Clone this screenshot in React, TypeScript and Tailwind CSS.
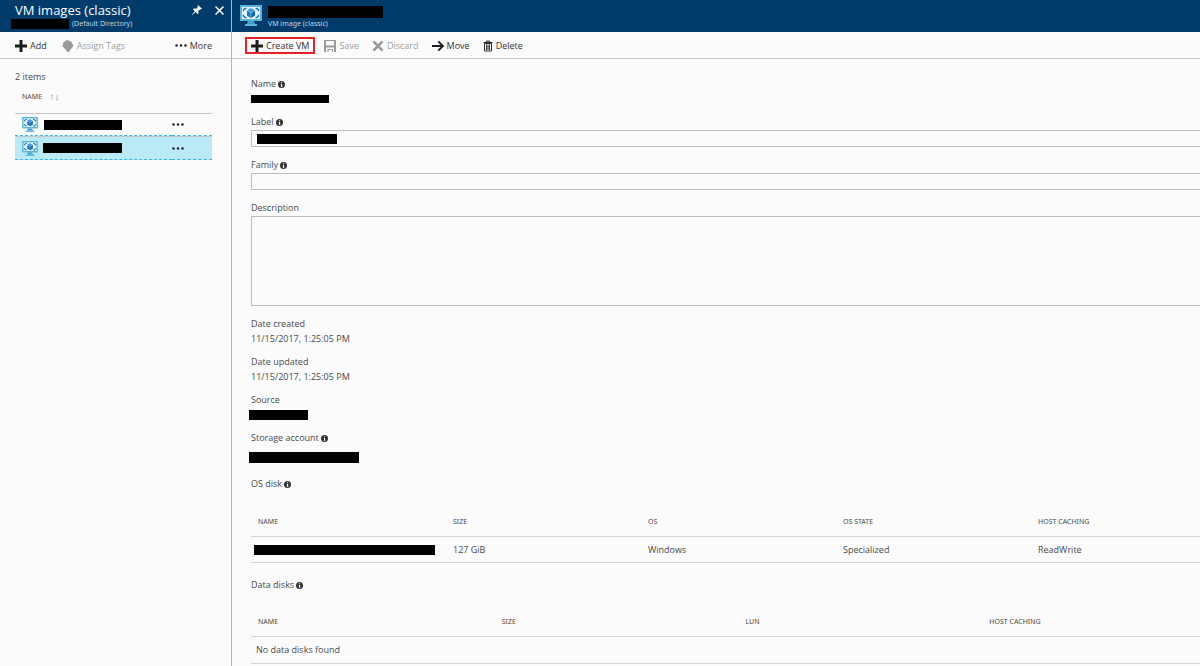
import type { ReactNode } from "react";

const osDiskColumns = ["NAME", "SIZE", "OS", "OS STATE", "HOST CACHING"];
const dataDiskColumns = ["NAME", "SIZE", "LUN", "HOST CACHING"];

function PlusIcon() {
  return (
    <svg width="12" height="12" viewBox="0 0 12 12" fill="#1c1c1c" aria-hidden="true">
      <path d="M4.500 0h3v4.500H12v3H7.500V12h-3V7.500H0v-3h4.500z" />
    </svg>
  );
}

function TagIcon() {
  return (
    <svg width="12" height="12" viewBox="0 0 12 12" fill="#9a9a9a" aria-hidden="true">
      <path d="M5 0 9 1.500 11.500 5.500 7 12 5.500 12 .7 6.300 1.300 2.500z" />
    </svg>
  );
}

function SaveIcon() {
  return (
    <svg width="12" height="12" viewBox="0 0 12 12" fill="none" stroke="#9a9a9a" aria-hidden="true">
      <path d="M1 12V0M11 12V0M1 6.500h10" strokeWidth="2" />
      <path d="M2 .5h8" />
      <path d="M4 12V9.500h4.500V12" strokeWidth="1.200" />
    </svg>
  );
}

function DiscardIcon() {
  return (
    <svg width="12" height="12" viewBox="0 0 12 12" stroke="#9a9a9a" strokeWidth="2.600" aria-hidden="true">
      <path d="M1.500 1.500l9 9M10.500 1.500l-9 9" />
    </svg>
  );
}

function MoveIcon() {
  return (
    <svg width="12" height="12" viewBox="0 0 12 12" fill="none" stroke="#1c1c1c" strokeWidth="1.800" aria-hidden="true">
      <path d="M0 6h11M6.300 1.300 11 6l-4.700 4.700" />
    </svg>
  );
}

function DeleteIcon() {
  return (
    <svg width="10" height="12" viewBox="0 0 10 12" fill="none" stroke="#2b2b2b" aria-hidden="true">
      <path d="M.5 2.500h9M3.500 2V1h3v1" />
      <path d="M1.500 3.500h7v7.500h-7zM3.500 4.500v5.500M5 4.500v5.500M6.500 4.500v5.500" />
    </svg>
  );
}

function DotsIcon() {
  return (
    <svg width="12" height="3" viewBox="0 0 12 3" fill="#1c1c1c" aria-hidden="true">
      <circle cx="1.500" cy="1.500" r="1.200" />
      <circle cx="6" cy="1.500" r="1.200" />
      <circle cx="10.500" cy="1.500" r="1.200" />
    </svg>
  );
}

function InfoIcon() {
  return (
    <svg width="7" height="7" viewBox="0 0 7 7" aria-hidden="true">
      <circle cx="3.500" cy="3.500" r="3.500" fill="#333" />
      <path d="M3 1.200h1.100v1H3zM2.700 2.900h1.400v2.300h.4v.6H2.700v-.6H3V3.500h-.3z" fill="#fff" />
    </svg>
  );
}

function VmIcon({ className }: { className: string }) {
  return (
    <svg className={className} viewBox="0 0 22 21" aria-hidden="true">
      <path d="M0 0h22v16H0z" fill="#59b4d9" />
      <path d="M2 2h18v12H2z" fill="#eaf6fb" />
      <path d="M8 16h6l1 3H7z" fill="#3f9fc6" />
      <path d="M5 19h12v2H5z" fill="#59b4d9" />
      <path
        d="M3.500 6.200V5l1.500-1.500h1.500M15.500 3.500H17L18.500 5v1.200M18.500 9.800V11L17 12.500h-1.500M6.500 12.500H5L3.500 11V9.800"
        fill="none"
        stroke="#1878c4"
        strokeWidth="1.500"
      />
      <path d="M11 3l4 2.200-4 2.300-4-2.300z" fill="#3c9ade" />
      <path d="M7 5.600l3.800 2.200V13L7 10.700z" fill="#1878c4" />
      <path d="M15 5.600l-3.800 2.200V13l3.800-2.300z" fill="#0f66b4" />
    </svg>
  );
}

function PinIcon() {
  return (
    <svg width="10" height="10" viewBox="0 0 10 10" fill="#fff" aria-hidden="true">
      <path d="M6 0l4 3.700-1 .7-.8-.2L6.300 6l.2 2.200-.9.8-2-2L.3 10 0 9.700l2.800-3.500L1 4.300l.9-.8 2.300.2L6 1.800 5.400.8z" />
    </svg>
  );
}

function CloseIcon() {
  return (
    <svg width="9" height="9" viewBox="0 0 9 9" stroke="#fff" strokeWidth="1.500" aria-hidden="true">
      <path d="M.5.5l8 8M8.500.5l-8 8" />
    </svg>
  );
}

// Private values are shown as a solid bar
function Redacted({ className }: { className: string }) {
  return <span aria-hidden="true" className={`block shrink-0 bg-black ${className}`} />;
}

function Command({ icon, label, disabled = false }: { icon: ReactNode; label: string; disabled?: boolean }) {
  return (
    <button type="button" disabled={disabled} className="flex items-center gap-[3px] text-[#333] disabled:text-[#a0a0a0]">
      {icon}
      {label}
    </button>
  );
}

function Field({ label, info = false, children }: { label: string; info?: boolean; children: ReactNode }) {
  return (
    <div className="mb-[9px]">
      <div className="mb-px flex items-center gap-0.5">
        {label}
        {info && <InfoIcon />}
      </div>
      {children}
    </div>
  );
}

function FieldLabel({ id, label, info = false }: { id: string; label: string; info?: boolean }) {
  return (
    <label htmlFor={id} className="mb-px flex items-center gap-0.5">
      {label}
      {info && <InfoIcon />}
    </label>
  );
}

function TableHead({ columns }: { columns: string[] }) {
  return (
    <thead>
      <tr className="font-['Noto_Sans',sans-serif] text-[7px]">
        {columns.map((c) => (
          <th key={c} scope="col" className="h-[30px] border-b border-[#d4d4d4] pl-[7px] text-left font-normal">
            {c}
          </th>
        ))}
      </tr>
    </thead>
  );
}

function ListPane() {
  return (
    <aside className="w-[232px] shrink-0 border-r border-[#b4b4b4]">
      <header className="flex h-8 justify-between bg-[#003b69] pr-[7px] pl-[15px] text-white">
        <div>
          <h1 className="pt-0.5 text-[13px] leading-4">VM images (classic)</h1>
          <div className="-ml-1 flex items-center gap-[3px] font-['Noto_Sans',sans-serif] text-[7px] leading-[11px] text-[#c3d3e0]">
            <Redacted className="h-[10px] w-[58px]" />
            (Default Directory)
          </div>
        </div>
        <div className="flex h-5 items-center gap-[13px]">
          <button type="button" aria-label="Pin">
            <PinIcon />
          </button>
          <button type="button" aria-label="Close">
            <CloseIcon />
          </button>
        </div>
      </header>

      <div className="flex h-[27px] items-center border-b border-[#c8c8c8] pt-px pr-[19px] pl-[15px]">
        <Command icon={<PlusIcon />} label="Add" />
        <div className="ml-[15px] flex-1">
          <Command icon={<TagIcon />} label="Assign Tags" disabled />
        </div>
        <Command icon={<DotsIcon />} label="More" />
      </div>

      <div className="pt-[11px] pr-[19px] pl-[15px]">
        <p>2 items</p>
        <table className="w-full border-separate border-spacing-0">
          <thead>
            <tr className="font-['Noto_Sans',sans-serif] text-[7px]">
              <th colSpan={2} scope="col" className="h-[30px] border-b border-[#c8c8c8] pb-[3px] pl-[7px] text-left font-normal">
                <button type="button" className="flex items-center gap-2">
                  NAME
                  <svg width="9" height="7" viewBox="0 0 9 7" fill="none" stroke="#b8b8b8" strokeWidth=".8" aria-hidden="true">
                    <path d="M2 6V.8M.5 2.300 2 .8l1.500 1.500M7 1v5.200M5.500 4.700 7 6.200l1.500-1.500" />
                  </svg>
                </button>
              </th>
            </tr>
          </thead>
          <tbody>
            <tr>
              <td className="h-[22px] border-b border-dashed border-[#3bb5dc] pl-[7px]">
                <div className="flex items-center gap-[6px]">
                  <VmIcon className="h-[15px] w-4" />
                  <Redacted className="h-[10px] w-[78px]" />
                </div>
              </td>
              <td className="w-10 border-b border-dashed border-[#3bb5dc]">
                <button type="button" aria-label="Row actions" className="block">
                  <DotsIcon />
                </button>
              </td>
            </tr>
            <tr className="bg-[#bbeaf7]">
              <td className="h-6 border-t border-b border-t-[#c0c8cc] border-b-[#3bb5dc] pl-[7px] [border-bottom-style:dashed]">
                <div className="flex items-center gap-[5px]">
                  <VmIcon className="h-[15px] w-4" />
                  <Redacted className="h-[10px] w-[79px]" />
                </div>
              </td>
              <td className="w-10 border-t border-b border-t-[#c0c8cc] border-b-[#3bb5dc] [border-bottom-style:dashed]">
                <button type="button" aria-label="Row actions" className="block">
                  <DotsIcon />
                </button>
              </td>
            </tr>
          </tbody>
        </table>
      </div>
    </aside>
  );
}

function DetailPane() {
  return (
    <main className="min-w-0 flex-1 overflow-hidden">
      <header className="flex h-8 items-start gap-[6px] bg-[#003b69] pt-[5px] pl-2 text-white">
        <VmIcon className="h-[21px] w-[22px]" />
        <div className="pt-px">
          <Redacted className="h-3 w-[115px]" />
          <p className="font-['Noto_Sans',sans-serif] text-[7px] leading-[11px] text-[#c3d3e0]">VM image (classic)</p>
        </div>
      </header>

      <div className="flex h-[27px] items-center gap-[13px] border-b border-[#c8c8c8] pt-px pl-[13px]">
        {/* Primary action gets the red callout frame */}
        <div className="-mr-1 flex h-[17px] items-center border-2 border-[#e8202a] px-1">
          <Command icon={<PlusIcon />} label="Create VM" />
        </div>
        <Command icon={<SaveIcon />} label="Save" disabled />
        <Command icon={<DiscardIcon />} label="Discard" disabled />
        <Command icon={<MoveIcon />} label="Move" />
        <Command icon={<DeleteIcon />} label="Delete" />
      </div>

      {/* Form runs past the right edge of the blade */}
      <div className="-mr-[26px] pt-[18px] pl-[19px]">
        <Field label="Name" info>
          <div className="flex h-[14px] items-center">
            <Redacted className="h-2 w-[78px]" />
          </div>
        </Field>

        <div className="mb-[11px]">
          <FieldLabel id="label" label="Label" info />
          <div className="flex h-[17px] items-center border border-[#bdbdbd] pl-[5px]">
            <Redacted className="h-[10px] w-20" />
            <input id="label" className="h-full min-w-0 flex-1 bg-transparent outline-none" />
          </div>
        </div>

        <div className="mb-[11px]">
          <FieldLabel id="family" label="Family" info />
          <input id="family" className="block h-[17px] w-full border border-[#bdbdbd] bg-transparent px-[5px] outline-none" />
        </div>

        <div className="mb-[11px]">
          <FieldLabel id="description" label="Description" />
          <textarea
            id="description"
            className="block h-[90px] w-full resize-none border border-[#bdbdbd] bg-transparent px-[5px] outline-none"
          />
        </div>

        <Field label="Date created">
          <p>11/15/2017, 1:25:05 PM</p>
        </Field>
        <Field label="Date updated">
          <p>11/15/2017, 1:25:05 PM</p>
        </Field>
        <Field label="Source">
          <div className="-ml-0.5 flex h-[14px] items-center">
            <Redacted className="h-[10px] w-[59px]" />
          </div>
        </Field>
        <Field label="Storage account" info>
          <div className="-ml-0.5 flex h-[22px] items-center">
            <Redacted className="h-[11px] w-[110px]" />
          </div>
        </Field>

        <h2 className="flex items-center gap-0.5">
          OS disk <InfoIcon />
        </h2>
        <table className="mt-4 w-full table-fixed border-separate border-spacing-0">
          <TableHead columns={osDiskColumns} />
          <tbody>
            <tr>
              <td className="h-[26px] border-b border-[#d4d4d4] pl-[3px]">
                <Redacted className="h-[10px] w-[181px]" />
              </td>
              <td className="border-b border-[#d4d4d4] pl-[7px]">127 GiB</td>
              <td className="border-b border-[#d4d4d4] pl-[7px]">Windows</td>
              <td className="border-b border-[#d4d4d4] pl-[7px]">Specialized</td>
              <td className="border-b border-[#d4d4d4] pl-[7px]">ReadWrite</td>
            </tr>
          </tbody>
        </table>

        <h2 className="mt-[15px] flex items-center gap-0.5">
          Data disks <InfoIcon />
        </h2>
        <table className="mt-[15px] w-full table-fixed border-separate border-spacing-0">
          <TableHead columns={dataDiskColumns} />
          <tbody>
            <tr>
              <td colSpan={4} className="h-[27px] border-b border-[#d4d4d4] pl-[5px]">
                No data disks found
              </td>
            </tr>
          </tbody>
        </table>
      </div>
    </main>
  );
}

export default function App() {
  return (
    <div className="flex min-h-screen overflow-hidden bg-[#fbfbfb] font-['Open_Sans','Noto_Sans',sans-serif] text-[9px] leading-[14px] text-[#4a4a4a]">
      <ListPane />
      <DetailPane />
    </div>
  );
}
